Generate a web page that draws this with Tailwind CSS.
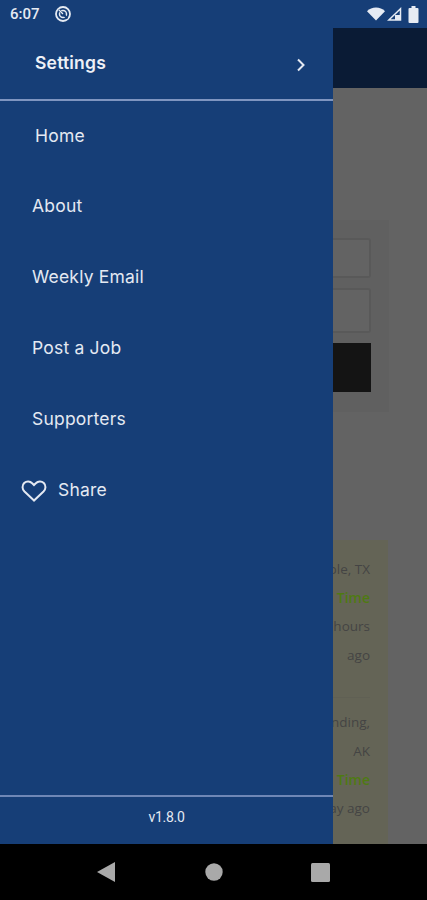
<!DOCTYPE html>
<html lang="en">
<head>
  <meta charset="UTF-8">
  <meta name="viewport" content="width=device-width, initial-scale=1.0">
  <title>Menu</title>
  <script src="https://cdn.jsdelivr.net/npm/@tailwindcss/browser@4"></script>
</head>
<body class="bg-black">
  <div class="w-[427px] h-[900px] flex flex-col overflow-hidden font-['Inter',sans-serif]">

    <!-- status bar -->
    <div class="h-7 shrink-0 bg-[#163e77] flex items-center justify-between pl-[10px] pr-[8px] text-[#e6ebf3]">
      <div class="flex items-center gap-[14px]">
        <span class="text-[15px] font-['Roboto',sans-serif] font-medium">6:07</span>
        <svg class="w-[18px] h-[18px]" viewBox="0 0 18 18" fill="none" stroke="currentColor">
          <circle cx="9" cy="9" r="7" stroke-width="1.800"/>
          <circle cx="9" cy="9" r="3.500" stroke-width="1.500"/>
          <path d="M4.500 4.500l9 9" stroke="#163e77" stroke-width="2.200"/>
          <path d="M4.500 4.500l4.500 4.500" stroke-width="1.200"/>
        </svg>
      </div>
      <div class="flex items-center gap-[2px]">
        <svg class="w-[18px] h-[14px]" viewBox="0 0 18 14" fill="currentColor"><path d="M0 4.200C2.400 1.700 5.500.5 9 .5s6.600 1.200 9 3.700L9 13.500z"/></svg>
        <svg class="w-[15px] h-[14px]" viewBox="0 0 15 14" fill="none" stroke="currentColor" stroke-width="1.500"><path d="M1.800 13 13.500 1.800V13z"/><path d="M8 13V8h5.500v5z" fill="currentColor" stroke="none"/></svg>
        <svg class="w-[11px] h-[17px] ml-[4px]" viewBox="0 0 11 17" fill="currentColor"><path d="M3.500 0h4v2h2a1 1 0 0 1 1 1v13a1 1 0 0 1-1 1h-8a1 1 0 0 1-1-1V3a1 1 0 0 1 1-1h2z"/></svg>
      </div>
    </div>

    <div class="flex-1 flex min-h-0">
      <!-- drawer -->
      <aside class="w-[333px] shrink-0 bg-[#163e77] flex flex-col text-[#e4e9f2]">
        <div class="h-[73px] shrink-0 border-b-2 border-[#7f95c0] pl-[35px] pr-[25px] flex items-center justify-between">
          <span class="text-[17.500px] tracking-[0.2px] font-semibold text-[#edf0f6]">Settings</span>
          <svg class="w-[14px] h-[14px] mt-[2px]" viewBox="0 0 14 14" fill="none" stroke="currentColor" stroke-width="2"><path d="M4 1.500 9.500 7 4 12.500"/></svg>
        </div>
        <nav class="flex-1 flex flex-col text-[17.500px] tracking-[0.2px]">
          <a class="h-[70px] flex items-center pl-[35px]">Home</a>
          <a class="h-[71px] flex items-center pl-[32px]">About</a>
          <a class="h-[71px] flex items-center pl-[32px]">Weekly Email</a>
          <a class="h-[71px] flex items-center pl-[32px]">Post a Job</a>
          <a class="h-[71px] flex items-center pl-[32px]">Supporters</a>
          <a class="h-[71px] flex items-center pl-[21px] gap-[11px]">
            <svg class="w-[26px] h-[24px]" viewBox="0 0 26 24" fill="none" stroke="currentColor" stroke-width="2"><path d="M13 21.500 3.500 12.500C1 10 .9 6.300 3.200 4c2.300-2.200 5.800-2 8 .3L13 6l1.800-1.700c2.200-2.300 5.700-2.500 8-.3 2.300 2.300 2.200 6-.3 8.500z"/></svg>
            <span>Share</span>
          </a>
        </nav>
        <div class="h-[49px] shrink-0 border-t-2 border-[#6f87b6] flex items-center justify-center pb-[6px] text-[14px] tracking-[-0.3px] font-['Roboto',sans-serif]">v1.8.0</div>
      </aside>

      <!-- page behind the drawer -->
      <div class="flex-1 min-w-0 bg-[#636363] flex flex-col">
        <div class="h-[60px] shrink-0 bg-[#0a1b35]"></div>
        <div class="h-[132px] shrink-0"></div>
        <div class="h-[192px] shrink-0 mr-[38px] bg-[#606060] pr-[18px] pt-[18px] flex flex-col">
          <div class="h-[40px] border-2 border-l-0 border-[#595959] rounded-r-[3px] bg-[#636363]"></div>
          <div class="h-[45px] mt-[10px] border-2 border-l-0 border-[#595959] rounded-r-[3px] bg-[#636363]"></div>
          <div class="h-[49px] mt-[10px] bg-[#141414]"></div>
        </div>
        <div class="h-[128px] shrink-0"></div>
        <div class="flex-1 mr-[39px] bg-[#646456] pr-[18px] text-[13.500px] font-['Open_Sans',sans-serif] text-[#444444] overflow-hidden whitespace-nowrap">
          <div class="h-[158px] flex flex-col items-end pt-[15px] border-b border-[#606054]">
            <p class="h-[29px] leading-[29px]">ple, TX</p>
            <p class="h-[28px] leading-[28px] font-semibold text-[14px] text-[#4f7a12]">Time</p>
            <p class="h-[29px] leading-[29px]">hours</p>
            <p class="h-[28px] leading-[28px]">ago</p>
          </div>
          <div class="flex flex-col items-end pt-[10px]">
            <p class="h-[29px] leading-[29px]">nding,</p>
            <p class="h-[28px] leading-[28px]">AK</p>
            <p class="h-[29px] leading-[29px] font-semibold text-[14px] text-[#4f7a12]">Time</p>
            <p class="h-[28px] leading-[28px]">ay ago</p>
          </div>
        </div>
      </div>
    </div>

    <!-- nav bar -->
    <div class="h-14 shrink-0 bg-black flex items-center pl-[97px] pr-[97px] justify-between">
      <svg class="w-[18px] h-[20px]" viewBox="0 0 18 20" fill="#a9a9a9"><path d="M18 0v20L0 10z"/></svg>
      <svg class="w-[18px] h-[18px] ml-[2px]" viewBox="0 0 18 18" fill="#a9a9a9"><circle cx="9" cy="9" r="8.700"/></svg>
      <svg class="w-[19px] h-[19px]" viewBox="0 0 19 19" fill="#a9a9a9"><rect width="19" height="19" rx="1.500"/></svg>
    </div>
  </div>
</body>
</html>
